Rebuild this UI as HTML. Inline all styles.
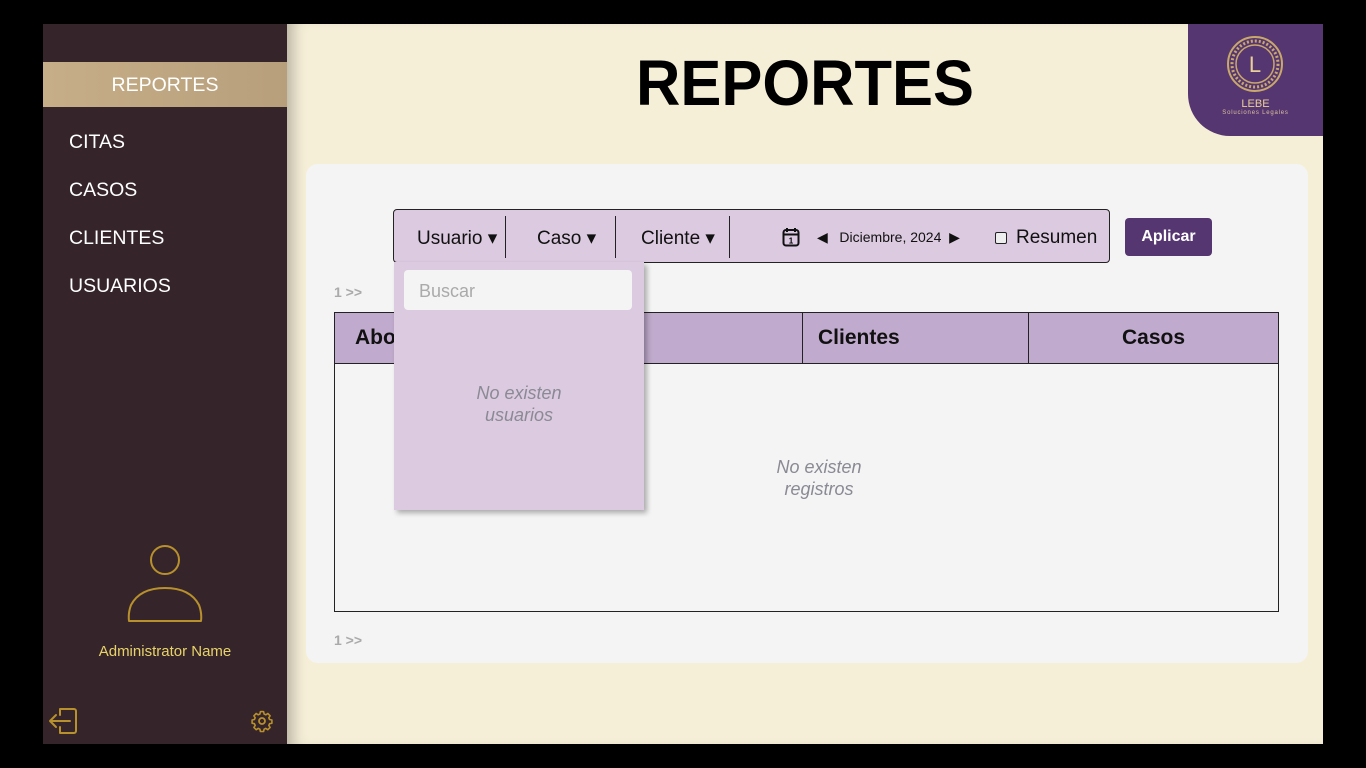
<!DOCTYPE html>
<html><head><meta charset="utf-8"><style>
*{box-sizing:border-box;margin:0;padding:0}
body{width:1366px;height:768px;background:#000;position:relative;overflow:hidden;font-family:"Liberation Sans",sans-serif}
.abs{position:absolute}
#side{left:43px;top:24px;width:244px;height:720px;background:#35252b}
#main{left:287px;top:24px;width:1036px;height:720px;background:#f6efd8;box-shadow:inset 14px 0 14px -8px rgba(0,0,0,.25)}
.nav{left:26px;color:#fff;font-size:19.5px;letter-spacing:0}
#act{left:0;top:38px;width:244px;height:45px;background:linear-gradient(90deg,#c6ae88,#b89f7c);color:#fff;font-size:19.5px;text-align:center;line-height:47px}
#card{left:306px;top:164px;width:1002px;height:499px;background:#f4f4f4;border-radius:12px}
#bar{left:393px;top:209px;width:717px;height:54px;background:#dccae0;border:1px solid #222;border-radius:4px}
.f{font-size:19px;color:#111;top:17px}
.sep{top:6px;width:1px;height:42px;background:#222}
#dd{left:394px;top:262px;width:250px;height:248px;background:#dccae0;box-shadow:3px 3px 5px rgba(0,0,0,.3)}
.it{font-style:italic;color:#8a8a95;font-size:18px;text-align:center;line-height:22px}
#tbl{left:334px;top:312px;width:945px;height:300px;border:1px solid #222}
#th{left:0;top:0;width:943px;height:51px;background:#c0aacd;border-bottom:1px solid #222}
.hd{font-weight:bold;font-size:21px;top:13px;color:#111}
.pg{color:#aaa;font-weight:bold;font-size:14px;left:334px}
</style></head><body>
<div id="side" class="abs">
<div id="act" class="abs">REPORTES</div>
<div class="abs nav" style="top:107px">CITAS</div>
<div class="abs nav" style="top:155px">CASOS</div>
<div class="abs nav" style="top:203px">CLIENTES</div>
<div class="abs nav" style="top:251px">USUARIOS</div>
<svg class="abs" style="left:82px;top:519px" width="80" height="82" viewBox="0 0 80 82"><circle cx="40" cy="17" r="14" fill="none" stroke="#b8902c" stroke-width="2"/><path d="M4 78 Q3 70 6 62 Q15 45 40 45 Q65 45 74 62 Q77 70 76 78 Z" fill="none" stroke="#b8902c" stroke-width="2" stroke-linejoin="round"/></svg>
<div class="abs" style="left:0;width:244px;top:619px;text-align:center;color:#e8d36a;font-size:15px">Administrator Name</div>
<svg class="abs" style="left:5px;top:682px" width="30" height="30" viewBox="0 0 30 30"><path d="M12 3 H26 a2 2 0 0 1 2 2 V25 a2 2 0 0 1-2 2 H12 M12 3 V9 M12 27 V21 M22 15 H2 M8 9 L2 15 L8 21" fill="none" stroke="#b8902c" stroke-width="2" stroke-linejoin="round" stroke-linecap="round"/></svg>
<svg class="abs" style="left:207px;top:685px" width="24" height="24" viewBox="0 0 24 24"><circle cx="12" cy="12" r="3" fill="none" stroke="#b8902c" stroke-width="1.8"/><path d="M12 2.5l1.6.2.5 2.3 1.7.8 2-1.3 2.3 2.3-1.3 2 .8 1.7 2.3.5v3.2l-2.3.5-.8 1.7 1.3 2-2.3 2.3-2-1.3-1.7.8-.5 2.3h-3.2l-.5-2.3-1.7-.8-2 1.3-2.3-2.3 1.3-2-.8-1.7-2.3-.5v-3.2l2.3-.5.8-1.7-1.3-2 2.3-2.3 2 1.3 1.7-.8.5-2.3z" fill="none" stroke="#b8902c" stroke-width="1.6" stroke-linejoin="round"/></svg>
</div>
<div id="main" class="abs"></div>
<div class="abs" style="left:287px;width:1036px;top:46px;text-align:center;font-size:64px;font-weight:bold;color:#000"><span style="display:inline-block;transform:scaleX(.96)">REPORTES</span></div>
<div class="abs" style="left:1188px;top:24px;width:135px;height:112px;background:#563670;border-bottom-left-radius:42px">
<svg class="abs" style="left:38px;top:11px" width="58" height="58" viewBox="0 0 58 58"><circle cx="29" cy="29" r="27" fill="none" stroke="#c9a86b" stroke-width="2"/><circle cx="29" cy="29" r="23" fill="none" stroke="#c9a86b" stroke-width="3" stroke-dasharray="2 2"/><circle cx="29" cy="29" r="19" fill="#563670" stroke="#c9a86b" stroke-width="1.5"/><text x="29" y="37" text-anchor="middle" font-family="Liberation Sans" font-size="22" fill="#e8cf98">L</text></svg>
<div class="abs" style="left:0;width:135px;top:74px;text-align:center;color:#e8cf98;font-size:11px">LEBE</div>
<div class="abs" style="left:0;width:135px;top:86px;text-align:center;color:#d8c0a0;font-size:6px;letter-spacing:.8px">Soluciones Legales</div>
</div>
<div id="card" class="abs"></div>
<div id="bar" class="abs">
<div class="abs f" style="left:23px">Usuario ▾</div><div class="abs sep" style="left:111px"></div>
<div class="abs f" style="left:143px">Caso ▾</div><div class="abs sep" style="left:221px"></div>
<div class="abs f" style="left:247px">Cliente ▾</div><div class="abs sep" style="left:335px"></div>
<svg class="abs" style="left:388px;top:17px" width="18" height="20" viewBox="0 0 18 20"><rect x="1.5" y="3" width="15" height="15.5" rx="2.5" fill="none" stroke="#111" stroke-width="2"/><path d="M5 1v4M13 1v4M1.5 7.5h15" stroke="#111" stroke-width="2"/><text x="9" y="16.5" text-anchor="middle" font-size="8" font-weight="bold" font-family="Liberation Sans">1</text></svg>
<div class="abs" style="left:423px;top:19px;font-size:14px;color:#111">◀&nbsp;&nbsp; Diciembre, 2024 &nbsp;▶</div>
<div class="abs" style="left:601px;top:22px;width:12px;height:12px;border:1.5px solid #222;border-radius:2px;background:#eee"></div>
<div class="abs f" style="left:622px">Resumen</div>
</div>
<div class="abs" style="left:1125px;top:218px;width:87px;height:38px;background:#563670;border-radius:4px;color:#fff;font-weight:bold;font-size:16px;text-align:center;line-height:38px">Aplicar</div>
<div class="abs pg" style="top:284px">1 &gt;&gt;</div>
<div id="tbl" class="abs"><div id="th" class="abs">
<div class="abs hd" style="left:20px">Abogado</div>
<div class="abs" style="left:467px;top:0;width:1px;height:51px;background:#222"></div>
<div class="abs hd" style="left:483px">Clientes</div>
<div class="abs" style="left:693px;top:0;width:1px;height:51px;background:#222"></div>
<div class="abs hd" style="left:694px;width:249px;text-align:center">Casos</div>
</div>
<div class="abs it" style="left:384px;width:200px;top:143px">No existen<br>registros</div>
</div>
<div class="abs pg" style="top:632px">1 &gt;&gt;</div>
<div id="dd" class="abs">
<div class="abs" style="left:10px;top:8px;width:228px;height:40px;background:#f4f4f4;border-radius:4px;color:#aaa;font-size:18px;line-height:42px;padding-left:15px">Buscar</div>
<div class="abs it" style="left:0;width:250px;top:120px">No existen<br>usuarios</div>
</div>
</body></html>
